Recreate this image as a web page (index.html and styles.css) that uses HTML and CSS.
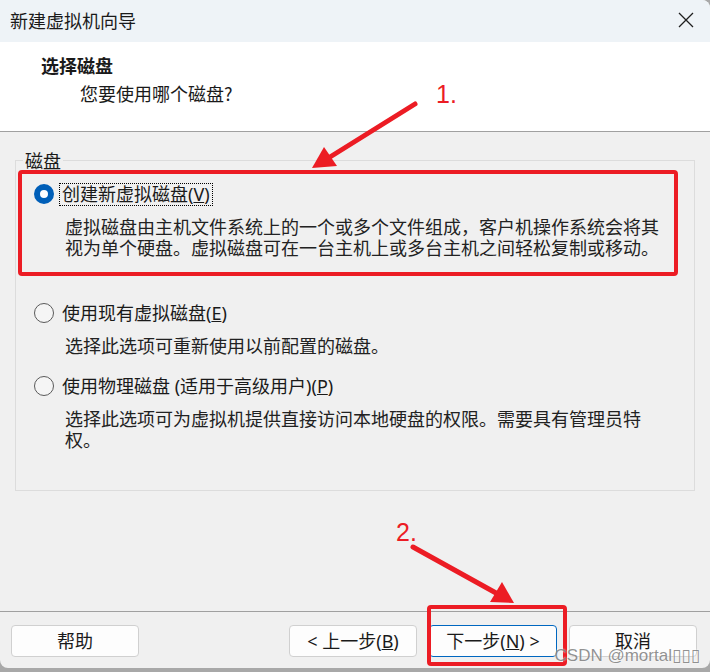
FILE: index.html
```html
<!DOCTYPE html>
<html lang="zh-CN">
<head>
    <meta charset="UTF-8">
    <meta name="viewport" content="width=device-width, initial-scale=1.0">
    <title>新建虚拟机向导</title>
    <link rel="stylesheet" href="styles.css">
</head>
<body>
    <div class="window">
        <div class="titlebar">
            <span class="title">新建虚拟机向导</span>
            <svg class="close" width="16" height="16" viewBox="0 0 16 16">
                <path d="M1 1 L15 15 M15 1 L1 15" stroke="#1f1f1f" stroke-width="1.3" fill="none"/>
            </svg>
        </div>

        <div class="header">
            <div class="heading">选择磁盘</div>
            <div class="subheading">您要使用哪个磁盘?</div>
        </div>

        <div class="content">
            <fieldset class="group">
                <legend>磁盘</legend>

                <div class="option first">
                    <div class="choice">
                        <span class="radio checked"></span>
                        <span class="label focused">创建新虚拟磁盘(<u>V</u>)</span>
                    </div>
                    <p class="desc">虚拟磁盘由主机文件系统上的一个或多个文件组成，客户机操作系统会将其视为单个硬盘。虚拟磁盘可在一台主机上或多台主机之间轻松复制或移动。</p>
                </div>

                <div class="option second">
                    <div class="choice">
                        <span class="radio"></span>
                        <span class="label">使用现有虚拟磁盘(<u>E</u>)</span>
                    </div>
                    <p class="desc">选择此选项可重新使用以前配置的磁盘。</p>
                </div>

                <div class="option">
                    <div class="choice">
                        <span class="radio"></span>
                        <span class="label">使用物理磁盘 (适用于高级用户)(<u>P</u>)</span>
                    </div>
                    <p class="desc">选择此选项可为虚拟机提供直接访问本地硬盘的权限。需要具有管理员特权。</p>
                </div>
            </fieldset>
        </div>

        <div class="footer">
            <button class="btn">帮助</button>
            <div class="spacer"></div>
            <button class="btn">&lt; 上一步(<u>B</u>)</button>
            <button class="btn default">下一步(<u>N</u>) &gt;</button>
            <button class="btn">取消</button>
        </div>

        <!-- annotations drawn over the dialog -->
        <svg class="marks" width="710" height="672" viewBox="0 0 710 672">
            <rect x="20" y="172" width="656" height="102" rx="2" fill="none" stroke="#ec1c24" stroke-width="4"/>
            <rect x="429" y="607" width="136" height="57" rx="2" fill="none" stroke="#ec1c24" stroke-width="4"/>
            <line x1="415" y1="104" x2="330" y2="157" stroke="#ec1c24" stroke-width="5" stroke-linecap="round"/>
            <polygon points="312,168 324,147 337,166" fill="#ec1c24"/>
            <line x1="413" y1="547" x2="496" y2="593" stroke="#ec1c24" stroke-width="5" stroke-linecap="round"/>
            <polygon points="514,603 490,602 502,582" fill="#ec1c24"/>
            <text x="436" y="103" class="mark-num">1.</text>
            <text x="396" y="541" class="mark-num">2.</text>
        </svg>

        <div class="watermark">CSDN @mortal▯▯▯</div>
    </div>
</body>
</html>
```

FILE: styles.css
```css
body {
    margin: 0;
    background-color: #a8a8a8;
    font-family: "Noto Sans", "Noto Sans CJK SC", sans-serif;
    color: #1a1a1a;
}
.window {
    position: relative;
    width: 710px;
    height: 668px;
    display: flex;
    flex-direction: column;
    background-color: #f0f0f0;
    border-radius: 0 8px 8px 8px;
    overflow: hidden;
}
.titlebar {
    height: 42px;
    flex-shrink: 0;
    display: flex;
    align-items: center;
    justify-content: space-between;
    padding: 0 16px 0 10px;
    background-color: #eef3f7;
}
.title {
    font-family: "Noto Sans CJK SC", sans-serif;
    font-size: 18px;
    line-height: 22px;
    margin-top: -3px;
}
.close {
    margin-top: -2px;
}
.header {
    flex-shrink: 0;
    background-color: #ffffff;
    border-bottom: 1px solid #a0a0a0;
    padding-top: 12px;
    box-sizing: border-box;
    height: 90px;
}
.heading {
    padding-left: 41px;
    font-family: "Noto Sans CJK SC", sans-serif;
    font-size: 18px;
    font-weight: bold;
    line-height: 22px;
}
.subheading {
    padding-left: 80px;
    margin-top: 6px;
    font-family: "Noto Sans CJK SC", sans-serif;
    font-size: 18px;
    line-height: 22px;
}
.content {
    flex: 1;
    padding: 18px 15px 0 15px;
}
.group {
    margin: 0;
    padding: 12px 0 40px 18px;
    border: 1px solid #dcdcdc;
}
.group legend {
    margin-left: -11px;
    padding: 0 2px;
    font-family: "Noto Sans CJK SC", sans-serif;
    font-size: 18px;
    line-height: 20px;
}
.option.first {
    margin-bottom: 43px;
}
.option.second {
    margin-bottom: 18px;
}
.choice {
    display: flex;
    align-items: center;
    height: 24px;
}
.radio {
    width: 20px;
    height: 20px;
    box-sizing: border-box;
    border-radius: 50%;
    border: 1px solid #5a5a5a;
    background-color: #f5f5f5;
    margin-right: 5px;
}
.radio.checked {
    border: 6px solid #005fb8;
    background-color: #ffffff;
}
.label {
    font-family: "Noto Sans", "Noto Sans CJK SC", sans-serif;
    font-size: 18px;
    line-height: 21px;
    padding: 0 2px;
    border: 1px dotted transparent;
}
.label.focused {
    border-color: #000000;
}
.desc {
    margin: 10px 0 0 31px;
    width: 600px;
    font-family: "Noto Sans CJK SC", sans-serif;
    font-size: 18px;
    line-height: 21px;
    color: #222222;
}
.footer {
    height: 57px;
    flex-shrink: 0;
    display: flex;
    align-items: flex-start;
    gap: 12px;
    padding: 13px 13px 0 11px;
    box-sizing: border-box;
    border-top: 1px solid #a0a0a0;
}
.spacer {
    flex: 1;
}
.btn {
    width: 128px;
    height: 32px;
    border: 1px solid #d0d0d0;
    border-radius: 4px;
    background-color: #fdfdfd;
    font-family: "Noto Sans", "Noto Sans CJK SC", sans-serif;
    font-size: 18px;
    line-height: 22px;
    color: #1a1a1a;
    padding: 0;
}
.btn.default {
    border-color: #0067c0;
}
.marks {
    position: absolute;
    left: 0;
    top: 0;
    pointer-events: none;
}
.mark-num {
    font-family: "Liberation Sans", sans-serif;
    font-size: 25px;
    fill: #ec1c24;
}
.watermark {
    position: absolute;
    right: 10px;
    bottom: 2px;
    font-family: "Liberation Sans", "DejaVu Sans", sans-serif;
    font-size: 17px;
    color: rgba(110, 110, 110, 0.75);
    text-shadow: 0 0 2px #ffffff;
}
```
